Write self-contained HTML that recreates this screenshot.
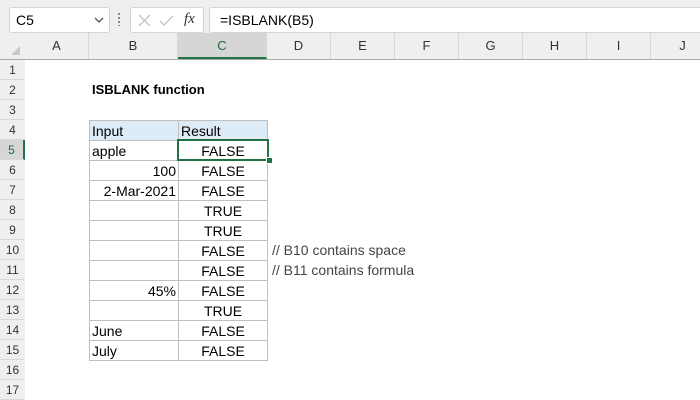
<!DOCTYPE html>
<html><head><style>
body{margin:0;width:700px;height:400px;overflow:hidden;background:#fff;font-family:"Liberation Sans",Calibri,sans-serif;font-size:14px;color:#000;position:relative}
.a{position:absolute}
.top{left:0;top:0;width:700px;height:60px;background:#efefef}
.box{background:#fff;border:1px solid #d4d4d4;border-radius:3px;height:24px;top:7px}
.ch{top:33px;height:26px;line-height:26px;text-align:center;color:#333;font-size:13px;border-right:1px solid #d8d8d8;box-sizing:border-box}
.hl{top:59px;left:0;width:700px;height:1px;background:#ababab}
.rh{left:0;width:25px;height:20px;line-height:20px;text-align:center;background:#efefef;color:#333;font-size:12px;border-bottom:1px solid #d8d8d8;box-sizing:border-box}
.c{height:21px;line-height:20px;box-sizing:border-box;border:1px solid #bfbfbf;padding:0 2px;white-space:nowrap}
.r{text-align:right}.m{text-align:center}
</style></head><body>
<div class="a top"></div>
<div class="a box" style="left:9px;width:99px"><span class="a" style="left:6px;top:4px">C5</span><svg class="a" style="left:84px;top:9px" width="10" height="6"><path d="M1 1L5 5L9 1" fill="none" stroke="#555" stroke-width="1.3"/></svg></div>
<div class="a" style="left:118px;top:13px;width:2px;height:13px;background:repeating-linear-gradient(#888 0 2px,transparent 2px 4px)"></div>
<div class="a box" style="left:130px;width:72px"><svg class="a" style="left:5px;top:5px" width="60" height="16"><path d="M3 2L14 13M14 2L3 13" stroke="#bbb" stroke-width="1.2"/><path d="M24 8L28 12L37 3" fill="none" stroke="#bbb" stroke-width="1.2"/></svg><i class="a" style="left:53px;top:3px;font-family:'Liberation Serif',serif;font-size:15px;color:#333">fx</i></div>
<div class="a box" style="left:209px;width:495px"><span class="a" style="left:10px;top:4px;font-size:14px">=ISBLANK(B5)</span></div>
<div class="a" style="left:0;top:33px;width:25px;height:26px;background:#efefef"><svg width="25" height="26"><path d="M20 13L20 22L11 22Z" fill="#c8c8c8"/></svg></div>
<div class="a ch" style="left:25px;width:64px">A</div>
<div class="a ch" style="left:89px;width:89px">B</div>
<div class="a ch" style="left:178px;width:89px;background:#d6d6d6;color:#1e6b3a;border-bottom:2px solid #217346">C</div>
<div class="a ch" style="left:267px;width:64px">D</div>
<div class="a ch" style="left:331px;width:64px">E</div>
<div class="a ch" style="left:395px;width:64px">F</div>
<div class="a ch" style="left:459px;width:64px">G</div>
<div class="a ch" style="left:523px;width:64px">H</div>
<div class="a ch" style="left:587px;width:64px">I</div>
<div class="a ch" style="left:651px;width:64px">J</div>
<div class="a hl"></div>
<div class="a" style="left:24px;top:60px;width:1px;height:340px;background:#ababab"></div>
<div class="a rh" style="top:60px">1</div><div class="a rh" style="top:80px">2</div><div class="a rh" style="top:100px">3</div><div class="a rh" style="top:120px">4</div>
<div class="a rh" style="top:140px;background:#d6d6d6;color:#1e6b3a;border-right:2px solid #217346">5</div>
<div class="a rh" style="top:160px">6</div><div class="a rh" style="top:180px">7</div><div class="a rh" style="top:200px">8</div><div class="a rh" style="top:220px">9</div><div class="a rh" style="top:240px">10</div><div class="a rh" style="top:260px">11</div><div class="a rh" style="top:280px">12</div><div class="a rh" style="top:300px">13</div><div class="a rh" style="top:320px">14</div><div class="a rh" style="top:340px">15</div><div class="a rh" style="top:360px">16</div><div class="a rh" style="top:380px">17</div>
<div class="a" style="left:92px;top:82px;font-weight:bold;font-size:13px">ISBLANK function</div>
<div class="a c" style="left:89px;top:120px;width:90px;background:#ddebf7">Input</div>
<div class="a c" style="left:178px;top:120px;width:90px;background:#ddebf7">Result</div>
<div class="a c" style="left:89px;top:140px;width:90px">apple</div>
<div class="a c" style="left:89px;top:160px;width:90px"><div class="r">100</div></div>
<div class="a c" style="left:89px;top:180px;width:90px"><div class="r">2-Mar-2021</div></div>
<div class="a c" style="left:89px;top:200px;width:90px"></div>
<div class="a c" style="left:89px;top:220px;width:90px"></div>
<div class="a c" style="left:89px;top:240px;width:90px"></div>
<div class="a c" style="left:89px;top:260px;width:90px"></div>
<div class="a c" style="left:89px;top:280px;width:90px"><div class="r">45%</div></div>
<div class="a c" style="left:89px;top:300px;width:90px"></div>
<div class="a c" style="left:89px;top:320px;width:90px">June</div>
<div class="a c" style="left:89px;top:340px;width:90px">July</div>
<div class="a c m" style="left:178px;top:140px;width:90px">FALSE</div>
<div class="a c m" style="left:178px;top:160px;width:90px">FALSE</div>
<div class="a c m" style="left:178px;top:180px;width:90px">FALSE</div>
<div class="a c m" style="left:178px;top:200px;width:90px">TRUE</div>
<div class="a c m" style="left:178px;top:220px;width:90px">TRUE</div>
<div class="a c m" style="left:178px;top:240px;width:90px">FALSE</div>
<div class="a c m" style="left:178px;top:260px;width:90px">FALSE</div>
<div class="a c m" style="left:178px;top:280px;width:90px">FALSE</div>
<div class="a c m" style="left:178px;top:300px;width:90px">TRUE</div>
<div class="a c m" style="left:178px;top:320px;width:90px">FALSE</div>
<div class="a c m" style="left:178px;top:340px;width:90px">FALSE</div>
<div class="a" style="left:177px;top:139px;width:92px;height:22px;box-sizing:border-box;border:2px solid #217346"></div>
<div class="a" style="left:266px;top:157px;width:5px;height:5px;background:#217346;border:1px solid #fff"></div>
<div class="a" style="left:272px;top:242px;color:#444">// B10 contains space</div>
<div class="a" style="left:272px;top:262px;color:#444">// B11 contains formula</div>
</body></html>
